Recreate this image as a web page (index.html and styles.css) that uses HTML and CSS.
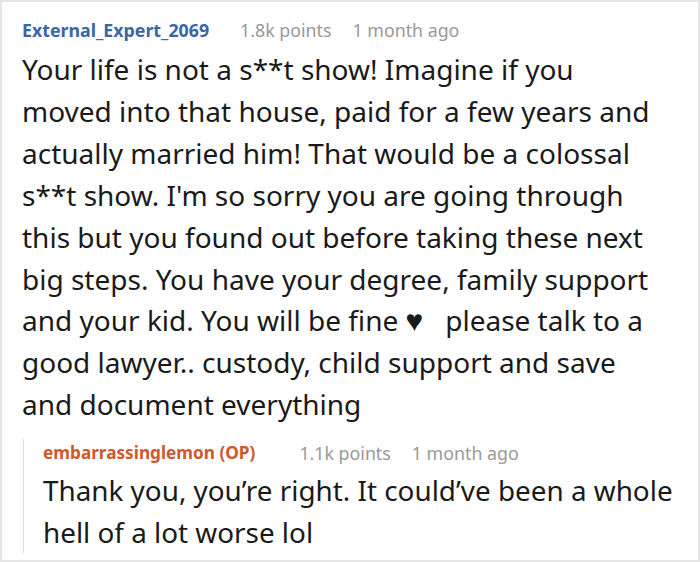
FILE: index.html
```
<!DOCTYPE html>
<html lang="en">
<head>
    <meta charset="UTF-8">
    <meta name="viewport" content="width=device-width, initial-scale=1.0">
    <title>Comment</title>
    <link rel="stylesheet" href="styles.css">
</head>
<body>
    <div class="comment-box">
        <div class="comment">
            <div class="comment-meta">
                <span class="author">External_Expert_2069</span>
                <span class="points">1.8k points</span>
                <span class="time">1 month ago</span>
            </div>
            <p class="comment-text">Your life is not a s**t show! Imagine if you moved into that house, paid for a few years and actually married him! That would be a colossal s**t show. I'm so sorry you are going through this but you found out before taking these next big steps. You have your degree, family support and your kid. You will be fine <span class="heart">&#9829;</span>&nbsp;&nbsp; please talk to a good lawyer.. custody, child support and save and document everything</p>
        </div>

        <div class="reply">
            <div class="comment-meta">
                <span class="author op">embarrassinglemon (OP)</span>
                <span class="points">1.1k points</span>
                <span class="time">1 month ago</span>
            </div>
            <p class="comment-text">Thank you, you’re right. It could’ve been a whole hell of a lot worse lol</p>
        </div>
    </div>
</body>
</html>
```

FILE: styles.css
```
/* page reset */
body {
    margin: 0;
    background: #fff;
    font-family: "Noto Sans", "Open Sans", sans-serif;
    color: #1a1a1a;
}

/* outer frame with thin grey border */
.comment-box {
    width: 700px;
    height: 562px;
    box-sizing: border-box;
    border: 2px solid #e6e6e6;
    padding: 14px 14px 0 20px;
}

.comment-meta {
    font-size: 17.8px;
    line-height: 28px;
    color: #999;
    display: flex;
}

.author {
    font-weight: bold;
    color: #3b66a6;
    margin-right: 31px;
}

.points {
    margin-right: 21px;
}

.comment-text {
    margin: 5px 0 0 0;
    max-width: 632px;
    font-size: 28px;
    line-height: 41.9px;
    color: #1a1a1a;
}

.heart {
    font-size: 30px;
    line-height: 1;
}

/* nested reply with left rule */
.reply {
    margin-top: 13px;
    border-left: 1px solid #dcdcdc;
    margin-left: 1px;
    padding-left: 19px;
}

.reply .author {
    color: #d0582a;
    font-size: 17.2px;
    margin-right: 44px;
}

.reply .comment-text {
    max-width: none;
    margin-top: 2px;
    font-size: 27.85px;
    line-height: 42px;
}
```
